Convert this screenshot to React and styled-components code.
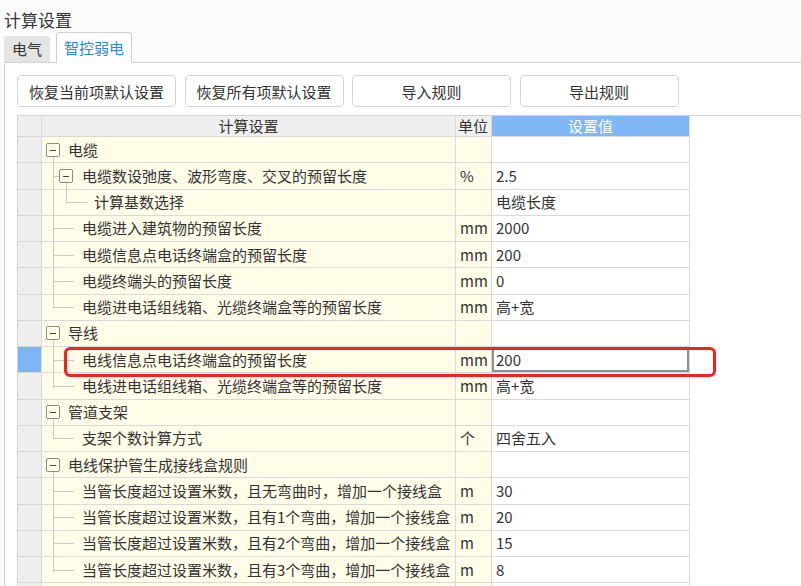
import styled, { createGlobalStyle } from 'styled-components';

const GlobalStyle = createGlobalStyle`
  html, body {
    margin: 0;
    padding: 0;
    background: #fcfcfc;
    overflow: hidden;
  }
  body {
    font-family: "Noto Sans CJK SC", "Noto Sans", sans-serif;
    color: #333;
  }
`;

const ROW_H = 26.25;
const LINE = '#c9c9c9';

const Page = styled.div`
  width: 801px;
  height: 586px;
  overflow: hidden;
`;

const Title = styled.div`
  height: 32px;
  box-sizing: border-box;
  padding: 9px 0 0 4px;
  font-size: 17px;
  line-height: 22px;
  color: #333;
`;

const TabBar = styled.div`
  display: flex;
  align-items: flex-end;
  gap: 6px;
  height: 30px;
  padding-left: 4px;
  position: relative;
  z-index: 1;
`;

const Tab = styled.div`
  box-sizing: border-box;
  height: ${p => (p.$active ? '31px' : '26px')};
  margin-bottom: ${p => (p.$active ? '-1px' : '0')};
  padding: 0 ${p => (p.$active ? '7px' : '8px')};
  font-size: 15px;
  line-height: ${p => (p.$active ? '30px' : '26px')};
  color: ${p => (p.$active ? '#2f86e0' : '#333')};
  background: ${p => (p.$active ? '#fff' : '#e4e4e4')};
  border: ${p => (p.$active ? '1px solid #cfcfcf' : 'none')};
  border-bottom: ${p => (p.$active ? '1px solid #fff' : 'none')};
  border-radius: 3px 3px 0 0;
`;

const Panel = styled.div`
  margin-left: 4px;
  width: 840px;
  border-top: 1px solid #d2d2d2;
  border-left: 1px solid #d2d2d2;
  background: #fff;
  padding: 12px 0 0 12px;
`;

const ButtonRow = styled.div`
  display: flex;
  gap: 8.5px;
`;

const Button = styled.button`
  width: 159px;
  height: 32px;
  box-sizing: border-box;
  background: #fff;
  border: 1px solid #d4d4d4;
  border-radius: 4px;
  font-family: inherit;
  font-size: 15px;
  color: #333;
  padding: 0;
`;

const GridFrame = styled.div`
  position: relative;
  margin-top: 8px;
  border-top: 1px solid #d2d2d2;
  border-left: 1px solid #d2d2d2;
`;

const Row = styled.div`
  display: grid;
  grid-template-columns: 24px 414px 36px 198px;
  height: ${p => (p.$header ? '21px' : `${ROW_H}px`)};
`;

const Cell = styled.div`
  box-sizing: border-box;
  border-right: 1px solid #d9d9d9;
  border-bottom: 1px solid #d9d9d9;
  font-size: 15px;
  white-space: nowrap;
  overflow: hidden;
  display: flex;
  align-items: center;
`;

const HeadCell = styled(Cell)`
  background: ${p => (p.$blue ? '#80b8f7' : '#efefef')};
  color: ${p => (p.$blue ? '#fff' : '#333')};
  justify-content: ${p => (p.$left ? 'flex-start' : 'center')};
  padding-left: ${p => (p.$left ? '2px' : '0')};
  line-height: 20px;
`;

const Selector = styled(Cell)`
  background: ${p => (p.$selected ? '#7db6f6' : '#efefef')};
`;

const TreeCell = styled(Cell)`
  background: #fffce8;
`;

const UnitCell = styled(Cell)`
  background: #fffce8;
  padding-left: 4px;
`;

const ValueCell = styled(Cell)`
  background: #fff;
  padding-left: 4px;
  box-shadow: ${p => (p.$editing ? 'inset 0 0 0 2px #8e8e8e' : 'none')};
`;

const Label = styled.span`
  line-height: 20px;
`;

const Highlight = styled.div`
  position: absolute;
  left: 46px;
  top: 231px;
  width: 652px;
  height: 30px;
  box-sizing: border-box;
  border: 3px solid #f2221c;
  border-radius: 6px;
  pointer-events: none;
`;

const Expander = ({ x, mid }) => (
  <g>
    <rect x={x + 0.5} y={mid - 6.5} width={13} height={13} rx={2} fill="none" stroke="#8a8a8a" />
    <line x1={x + 4} x2={x + 10} y1={mid + 0.5} y2={mid + 0.5} stroke="#444" />
  </g>
);

// connector lines + expand boxes for the tree column
const TreeLines = ({ kind, last, empty }) => {
  const H = ROW_H;
  const mid = 13;
  const widths = { g1: 26, g2: 40, l2: 40, l3: 52 };
  const w = widths[kind];
  return (
    <svg width={w} height={H} style={{ flex: 'none' }} shapeRendering="crispEdges">
      {kind === 'g1' && !empty && (
        <>
          <Expander x={4} mid={mid} />
          <line x1={11.5} x2={11.5} y1={mid + 7} y2={H} stroke={LINE} />
        </>
      )}
      {kind === 'g2' && (
        <>
          <line x1={11.5} x2={11.5} y1={0} y2={H} stroke={LINE} />
          <line x1={11} x2={17} y1={mid + 0.5} y2={mid + 0.5} stroke={LINE} />
          <Expander x={17} mid={mid} />
          <line x1={24.5} x2={24.5} y1={mid + 7} y2={H} stroke={LINE} />
        </>
      )}
      {kind === 'l2' && (
        <>
          <line x1={11.5} x2={11.5} y1={0} y2={last ? mid + 1 : H} stroke={LINE} />
          <line x1={11} x2={32} y1={mid + 0.5} y2={mid + 0.5} stroke={LINE} />
        </>
      )}
      {kind === 'l3' && (
        <>
          <line x1={11.5} x2={11.5} y1={0} y2={H} stroke={LINE} />
          <line x1={24.5} x2={24.5} y1={0} y2={mid + 1} stroke={LINE} />
          <line x1={24} x2={46} y1={mid + 0.5} y2={mid + 0.5} stroke={LINE} />
        </>
      )}
    </svg>
  );
};

const rows = [
  { kind: 'g1', text: '电缆' },
  { kind: 'g2', text: '电缆数设弛度、波形弯度、交叉的预留长度', unit: '%', value: '2.5' },
  { kind: 'l3', text: '计算基数选择', value: '电缆长度' },
  { kind: 'l2', text: '电缆进入建筑物的预留长度', unit: 'mm', value: '2000' },
  { kind: 'l2', text: '电缆信息点电话终端盒的预留长度', unit: 'mm', value: '200' },
  { kind: 'l2', text: '电缆终端头的预留长度', unit: 'mm', value: '0' },
  { kind: 'l2', last: true, text: '电缆进电话组线箱、光缆终端盒等的预留长度', unit: 'mm', value: '高+宽' },
  { kind: 'g1', text: '导线' },
  { kind: 'l2', text: '电线信息点电话终端盒的预留长度', unit: 'mm', value: '200', selected: true },
  { kind: 'l2', last: true, text: '电线进电话组线箱、光缆终端盒等的预留长度', unit: 'mm', value: '高+宽' },
  { kind: 'g1', text: '管道支架' },
  { kind: 'l2', last: true, text: '支架个数计算方式', unit: '个', value: '四舍五入' },
  { kind: 'g1', text: '电线保护管生成接线盒规则' },
  { kind: 'l2', text: '当管长度超过设置米数，且无弯曲时，增加一个接线盒', unit: 'm', value: '30' },
  { kind: 'l2', text: '当管长度超过设置米数，且有1个弯曲，增加一个接线盒', unit: 'm', value: '20' },
  { kind: 'l2', text: '当管长度超过设置米数，且有2个弯曲，增加一个接线盒', unit: 'm', value: '15' },
  { kind: 'l2', last: true, text: '当管长度超过设置米数，且有3个弯曲，增加一个接线盒', unit: 'm', value: '8' },
  { kind: 'g1', text: '', empty: true },
];

const buttons = ['恢复当前项默认设置', '恢复所有项默认设置', '导入规则', '导出规则'];

export default function App() {
  return (
    <Page>
      <GlobalStyle />
      <Title>计算设置</Title>
      <TabBar>
        <Tab>电气</Tab>
        <Tab $active>智控弱电</Tab>
      </TabBar>
      <Panel>
        <ButtonRow>
          {buttons.map(b => (
            <Button key={b}>{b}</Button>
          ))}
        </ButtonRow>
        <GridFrame>
          <Row $header>
            <HeadCell />
            <HeadCell>计算设置</HeadCell>
            <HeadCell $left>单位</HeadCell>
            <HeadCell $blue>设置值</HeadCell>
          </Row>
          {rows.map((r, i) => (
            <Row key={i}>
              <Selector $selected={r.selected} />
              <TreeCell>
                <TreeLines kind={r.kind} last={r.last} empty={r.empty} />
                <Label>{r.text}</Label>
              </TreeCell>
              <UnitCell>
                <Label>{r.unit}</Label>
              </UnitCell>
              <ValueCell $editing={r.selected}>
                <Label>{r.value}</Label>
              </ValueCell>
            </Row>
          ))}
          <Highlight />
        </GridFrame>
      </Panel>
    </Page>
  );
}
